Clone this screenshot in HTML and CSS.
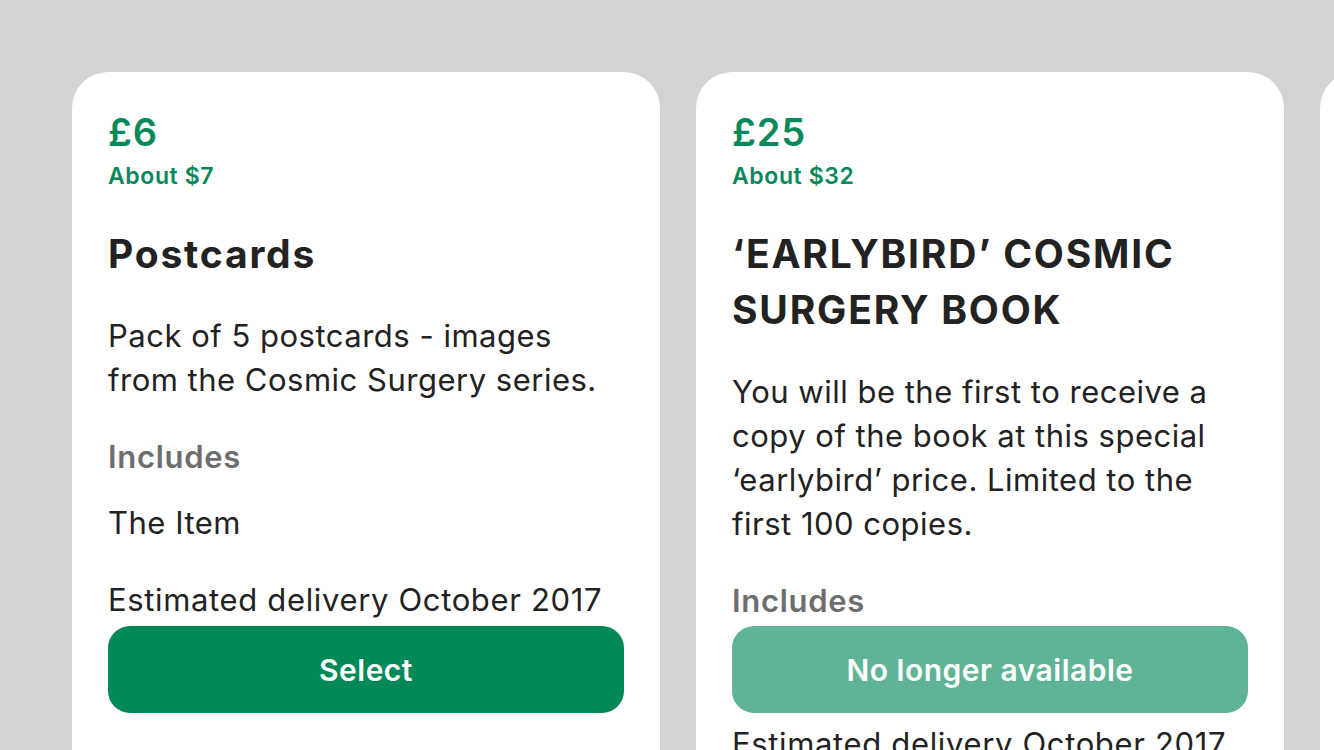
FILE: index.html
```html
<!DOCTYPE html>
<html lang="en">
<head>
<meta charset="utf-8">
<title>Rewards</title>
<link rel="stylesheet" href="styles.css">
</head>
<body>
<div class="rail">
  <div class="card">
    <div class="price">£6</div>
    <div class="approx">About $7</div>
    <h2 class="title">Postcards</h2>
    <p class="desc">Pack of 5 postcards - images from the Cosmic Surgery series.</p>
    <div class="label">Includes</div>
    <div class="item">The Item</div>
    <div class="delivery">Estimated delivery October 2017</div>
    <button class="btn">Select</button>
  </div>
  <div class="card">
    <div class="price">£25</div>
    <div class="approx">About $32</div>
    <h2 class="title">‘EARLYBIRD’ COSMIC SURGERY BOOK</h2>
    <p class="desc">You will be the first to receive a copy of the book at this special ‘earlybird’ price. Limited to the first 100 copies.</p>
    <div class="label">Includes</div>
    <div class="item">The Book</div>
    <div class="delivery">Estimated delivery October 2017</div>
    <button class="btn btn-off">No longer available</button>
  </div>
  <div class="card"></div>
</div>
</body>
</html>
```

FILE: styles.css
```css
html, body {
  margin: 0;
  padding: 0;
  height: 100%;
  overflow: hidden;
}
body {
  background: #d3d3d3;
  font-family: Inter, "Noto Sans", sans-serif;
  color: #222222;
}
.rail {
  display: flex;
  gap: 36px;
  padding: 72px 0 0 72px;
}
.card {
  position: relative;
  flex: 0 0 588px;
  height: 900px;
  box-sizing: border-box;
  background: #ffffff;
  border-radius: 36px;
  padding: 36px 36px 0 36px;
}
.price {
  font-size: 38px;
  line-height: 48px;
  font-weight: 600;
  letter-spacing: 0.8px;
  color: #07895a;
}
.approx {
  margin-top: 6px;
  font-size: 23px;
  line-height: 28px;
  font-weight: 600;
  letter-spacing: 0.6px;
  color: #07895a;
}
.title {
  margin: 36px 0 0 0;
  font-size: 39px;
  line-height: 56px;
  font-weight: 700;
  letter-spacing: 1.8px;
  color: #222222;
}
.desc {
  margin: 31.5px 0 0 0;
  font-size: 31px;
  line-height: 44px;
  font-weight: 400;
  letter-spacing: 0.5px;
}
.label {
  margin-top: 33px;
  font-size: 31px;
  line-height: 44px;
  font-weight: 600;
  letter-spacing: 0.7px;
  color: #6e6e6e;
}
.item {
  margin-top: 22px;
  font-size: 31px;
  line-height: 44px;
  letter-spacing: 0.5px;
}
.delivery {
  margin-top: 33px;
  font-size: 31px;
  line-height: 44px;
  letter-spacing: 0.65px;
}
.btn {
  position: absolute;
  left: 36px;
  right: 36px;
  top: 554px;
  height: 87px;
  border: 0;
  border-radius: 22px;
  background: #038857;
  color: #ffffff;
  font-family: Inter, "Noto Sans", sans-serif;
  font-size: 30px;
  font-weight: 600;
  letter-spacing: 0.5px;
  padding: 0;
}
.btn-off {
  background: #5eb495;
}
```
